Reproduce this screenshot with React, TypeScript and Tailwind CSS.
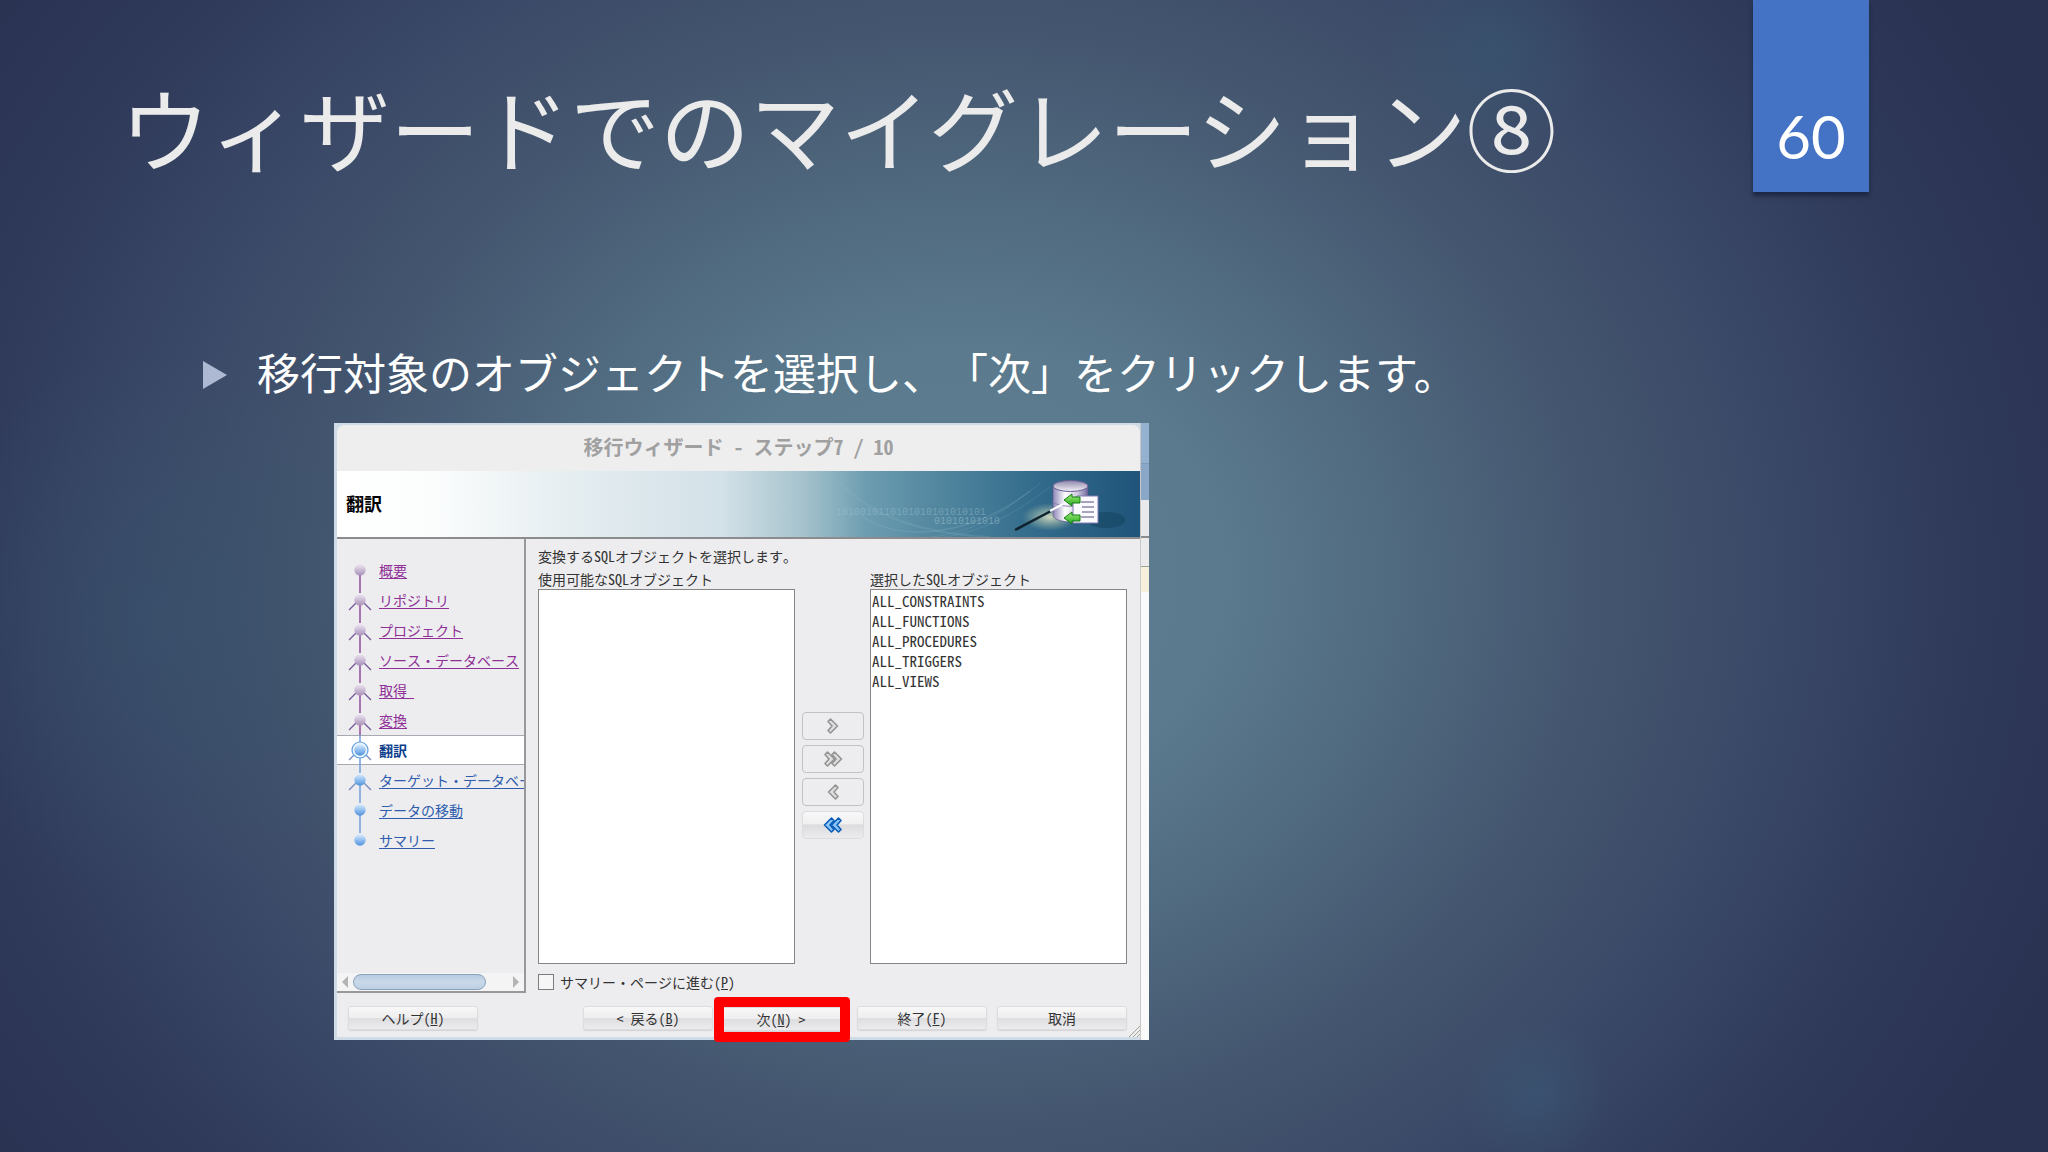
import { useState } from 'react';
import clsx from 'clsx';

type StepState = 'done' | 'current' | 'todo';

interface Step {
    label: string;
    state: StepState;
    branch: boolean;
}

const steps: Step[] = [
    { label: '概要', state: 'done', branch: false },
    { label: 'リポジトリ', state: 'done', branch: true },
    { label: 'プロジェクト', state: 'done', branch: true },
    { label: 'ソース・データベース', state: 'done', branch: true },
    { label: '取得\u00a0', state: 'done', branch: true },
    { label: '変換', state: 'done', branch: true },
    { label: '翻訳', state: 'current', branch: true },
    { label: 'ターゲット・データベース', state: 'todo', branch: true },
    { label: 'データの移動', state: 'todo', branch: false },
    { label: 'サマリー', state: 'todo', branch: false },
];

const selectedObjects = [
    'ALL_CONSTRAINTS',
    'ALL_FUNCTIONS',
    'ALL_PROCEDURES',
    'ALL_TRIGGERS',
    'ALL_VIEWS',
];

const buttonFace =
    'h-6 rounded-[3px] border border-[#dcdcde] bg-[linear-gradient(#f8f8f8_0%,#eeeeef_48%,#dedee0_52%,#ececee_100%)] text-sm leading-5 text-[#333] shadow-[0_1px_1px_#d4d4d6]';

// ステップ一覧の左側に並ぶ丸と線
const StepNode = ({ step, first, last }: { step: Step; first: boolean; last: boolean }) => {
    const done = step.state === 'done';
    const line = done ? '#8c4a9c' : '#6f9fdc';
    return (
        <svg className="h-[30px] w-[42px] shrink-0" viewBox="0 0 42 30" fill="none">
            <defs>
                <linearGradient id="ballDone" x1="0" y1="0" x2="0" y2="1">
                    <stop offset="0" stopColor="#ece6f2" />
                    <stop offset="1" stopColor="#a88fb8" />
                </linearGradient>
                <linearGradient id="ballTodo" x1="0" y1="0" x2="0" y2="1">
                    <stop offset="0" stopColor="#d8ecff" />
                    <stop offset="1" stopColor="#4f92de" />
                </linearGradient>
            </defs>
            {!first && <path d="M23 0v8" stroke={line} strokeWidth="1.5" />}
            {!last && <path d="M23 20v10" stroke={line} strokeWidth="1.5" />}
            {step.branch && (
                <path
                    d="M19 18l-7 7M27 18l7 7"
                    stroke={done ? '#75549a' : '#7288c0'}
                    strokeWidth="1.3"
                />
            )}
            {step.state === 'current' && (
                <circle cx="23" cy="15" r="8" fill="#eaf5ff" stroke="#5f9fe0" strokeWidth="1.2" />
            )}
            <circle cx="23" cy="15" r="5.7" fill={done ? 'url(#ballDone)' : 'url(#ballTodo)'} />
        </svg>
    );
};

const Chevron = ({ count, left, active }: { count: number; left?: boolean; active?: boolean }) => {
    const shape = 'M2 4.500L4.500 2L11.500 9L4.500 16L2 13.500L6 9Z';
    const fill = active ? '#8ec8fa' : '#dedede';
    const stroke = active ? '#0b5cb8' : '#949494';
    return (
        <svg
            className={clsx('h-[18px]', count === 2 ? 'w-5' : 'w-[14px]', left && '-scale-x-100')}
            viewBox={count === 2 ? '0 0 20 18' : '0 0 14 18'}
            fill={fill}
            stroke={stroke}
            strokeWidth="1.6"
            strokeLinejoin="round">
            <path d={shape} />
            {count === 2 && <path d={shape} transform="translate(7 0)" />}
        </svg>
    );
};

const BannerArt = () => (
    <svg className="absolute right-0 top-0 h-full w-[400px]" viewBox="0 0 400 66" fill="none">
        <defs>
            <radialGradient id="glow">
                <stop offset="0" stopColor="#f6f3c8" stopOpacity="0.8" />
                <stop offset="1" stopColor="#bcd0b0" stopOpacity="0" />
            </radialGradient>
            <linearGradient id="drum">
                <stop offset="0" stopColor="#8f86b8" />
                <stop offset="0.35" stopColor="#ffffff" />
                <stop offset="0.7" stopColor="#cfcadf" />
                <stop offset="1" stopColor="#6f6798" />
            </linearGradient>
            <linearGradient id="drumTop" x1="0" y1="0" x2="0" y2="1">
                <stop offset="0" stopColor="#8c86a8" />
                <stop offset="1" stopColor="#f4f2fa" />
            </linearGradient>
            <linearGradient id="arrow" x1="0" y1="0" x2="0" y2="1">
                <stop offset="0" stopColor="#a4f07a" />
                <stop offset="1" stopColor="#22a81c" />
            </linearGradient>
        </defs>
        <path d="M90 0C120 40 170 62 250 66" stroke="#8fb9c9" strokeOpacity="0.2" strokeWidth="2" />
        <path d="M120 44C160 72 230 66 290 20" stroke="#9cc4d2" strokeOpacity="0.2" strokeWidth="1.5" />
        <path d="M190 66C235 62 265 40 300 12M205 66C245 60 275 42 310 16" stroke="#8db4c6" strokeOpacity="0.2" />
        <text x="96" y="44" fill="#a9cbd8" fillOpacity="0.4" fontSize="10" fontFamily="Liberation Mono">
            1010010110101010101010101
        </text>
        <text x="194" y="53" fill="#b4d3de" fillOpacity="0.45" fontSize="10" fontFamily="Liberation Mono">
            01010101010
        </text>
        <ellipse cx="366" cy="49" rx="19" ry="8" fill="#12405c" fillOpacity="0.5" />
        <ellipse cx="310" cy="46" rx="28" ry="14" fill="url(#glow)" />
        <path d="M313 15v29c0 9 35 9 35 0V15z" fill="url(#drum)" stroke="#5e5488" strokeOpacity="0.6" />
        <path d="M313 30c2 7 33 7 35 0" stroke="#8b82ad" />
        <ellipse cx="330.500" cy="15" rx="17.500" ry="5.500" fill="url(#drumTop)" stroke="#655b92" />
        <path d="M275 59l36-19" stroke="#102430" strokeWidth="2.500" />
        <path d="M310 40l13-7" stroke="#ffffff" strokeWidth="2" />
        <path d="M337 25h21v27h-25V29z" fill="#fbfbff" stroke="#8078b8" />
        <path d="M341 31h13M342 36h12M342 41h12M341 46h13" stroke="#8a86ab" strokeWidth="1.300" />
        <path d="M324 29l8-6v3h8v6h-8v3z" fill="url(#arrow)" stroke="#157a14" />
        <path d="M324 47l8-6v3h8v6h-8v3z" fill="url(#arrow)" stroke="#157a14" />
    </svg>
);

const WizardWindow = () => {
    const [skipToSummary, setSkipToSummary] = useState(false);

    return (
        <div className="flex w-full max-w-[815px] bg-[#cfdce8] pb-[3px] pl-[3px] pt-[2px] font-['Noto_Sans_Mono_CJK_JP','Noto_Sans_CJK_JP',monospace]">
            <div className="min-w-0 flex-1 rounded-t-lg bg-[#ededef]">
                {/* タイトルバー */}
                <div className="flex h-[46px] items-center justify-center rounded-t-lg bg-[#eeeeef] pb-[2px] text-xl font-bold text-[#a0a0a0]">
                    移行ウィザード - ステップ7 / 10
                </div>

                {/* バナー */}
                <div className="relative flex h-[68px] items-center border-b-2 border-[#8c8c8e] bg-[linear-gradient(90deg,#ffffff_0%,#fbfdfd_12%,#e6eef1_28%,#d3e1e8_48%,#a6c3cd_58%,#6c9cb0_66%,#4f849d_76%,#326b8b_87%,#20547a_100%)] pb-[2px] pl-[9px]">
                    <BannerArt />
                    <h2 className="text-lg font-bold text-black">翻訳</h2>
                </div>

                <div className="flex">
                    {/* ステップ一覧 */}
                    <nav className="flex w-[189px] shrink-0 flex-col border-b-2 border-r-2 border-[#98989a] pt-4">
                        <ul>
                            {steps.map((step, i) => (
                                <li
                                    key={step.label}
                                    className={clsx(
                                        'flex h-[30px] items-center overflow-hidden whitespace-nowrap text-sm',
                                        step.state === 'current' &&
                                            'bg-white shadow-[inset_0_1px_0_#a9a9b4,inset_0_-1px_0_#a9a9b4]'
                                    )}>
                                    <StepNode step={step} first={i === 0} last={i === steps.length - 1} />
                                    {step.state === 'current' ? (
                                        <span className="font-bold text-[#0b3c8c]">{step.label}</span>
                                    ) : (
                                        <a
                                            href="#"
                                            className={clsx(
                                                'underline underline-offset-2',
                                                step.state === 'done' ? 'text-[#8f3096]' : 'text-[#2f5cae]'
                                            )}>
                                            {step.label}
                                        </a>
                                    )}
                                </li>
                            ))}
                        </ul>
                        {/* 横スクロールバー */}
                        <div className="mt-auto flex h-[18px] items-center justify-between bg-[#f4f4f5] px-1">
                            <svg className="h-3 w-2" viewBox="0 0 8 12" fill="#b4b4b6">
                                <path d="M7 0v12L1 6z" />
                            </svg>
                            <div className="ml-1 mr-auto h-4 w-[133px] rounded-full border border-[#8ba3bd] bg-[linear-gradient(#b7cbe0,#c9d9e9_50%,#bccfe2)]" />
                            <svg className="h-3 w-2" viewBox="0 0 8 12" fill="#b4b4b6">
                                <path d="M1 0v12l6-6z" />
                            </svg>
                        </div>
                    </nav>

                    {/* オブジェクト選択 */}
                    <div className="min-w-0 flex-1 pb-px pl-3 pr-[13px] pt-1 text-sm text-[#333]">
                        <p className="leading-[26px]">変換するSQLオブジェクトを選択します。</p>
                        <div className="flex">
                            <div className="min-w-0 flex-1">
                                <label htmlFor="available" className="block leading-5">
                                    使用可能なSQLオブジェクト
                                </label>
                                <select
                                    id="available"
                                    multiple
                                    className="block h-[375px] w-full overflow-hidden border border-[#858587] bg-white"
                                />
                            </div>
                            <div className="flex w-[75px] flex-col items-center gap-[5px] pt-[143px]">
                                <button aria-label="追加" className="flex h-7 w-[62px] items-center justify-center rounded border border-[#c2c2c4]">
                                    <Chevron count={1} />
                                </button>
                                <button aria-label="すべて追加" className="flex h-7 w-[62px] items-center justify-center rounded border border-[#c2c2c4]">
                                    <Chevron count={2} />
                                </button>
                                <button aria-label="削除" className="flex h-7 w-[62px] items-center justify-center rounded border border-[#c2c2c4]">
                                    <Chevron count={1} left />
                                </button>
                                <button
                                    aria-label="すべて削除"
                                    className="flex h-7 w-[62px] items-center justify-center rounded border border-[#dcdcde] bg-[linear-gradient(#f8f8f8_0%,#f0f0f0_45%,#dcdcde_50%,#ececee_100%)]">
                                    <Chevron count={2} left active />
                                </button>
                            </div>
                            <div className="min-w-0 flex-1">
                                <label htmlFor="selected" className="block leading-5">
                                    選択したSQLオブジェクト
                                </label>
                                <select
                                    id="selected"
                                    multiple
                                    className="block h-[375px] w-full overflow-hidden border border-[#858587] bg-white text-[15px]">
                                    {selectedObjects.map((name) => (
                                        <option key={name} className="h-5 px-px py-0 leading-[18px]">
                                            {name}
                                        </option>
                                    ))}
                                </select>
                            </div>
                        </div>
                        <label className="mt-2 flex h-5 items-center gap-[6px]">
                            <input
                                type="checkbox"
                                checked={skipToSummary}
                                onChange={(e) => setSkipToSummary(e.target.checked)}
                                className="h-4 w-4 appearance-none border border-[#7c7c7e] bg-[#f6f6f7] checked:bg-[#5f9fe0]"
                            />
                            <span>
                                サマリー・ページに進む(<u>P</u>)
                            </span>
                        </label>
                    </div>
                </div>

                {/* フッターのボタン */}
                <div className="relative flex pb-[6px] pl-[11px] pr-[13px] pt-[13px]">
                    <button className={clsx(buttonFace, 'w-[130px]')}>
                        ヘルプ(<u>H</u>)
                    </button>
                    <div className="ml-auto flex gap-[7px]">
                        <button className={clsx(buttonFace, 'w-[130px]')}>
                            &lt; 戻る(<u>B</u>)
                        </button>
                        <div className="relative z-10">
                            <button className={clsx(buttonFace, 'w-[130px] pr-2')}>
                                次(<u>N</u>) &gt;
                            </button>
                            <div className="pointer-events-none absolute -bottom-[11px] -left-[6px] -top-[9px] right-0 rounded-[4px] border-[10px] border-[#fe0000]" />
                        </div>
                        <button className={clsx(buttonFace, 'w-[130px]')}>
                            終了(<u>F</u>)
                        </button>
                    </div>
                    <button className={clsx(buttonFace, 'ml-[10px] w-[130px]')}>取消</button>
                    <svg className="absolute bottom-0 right-0 h-3 w-3" viewBox="0 0 12 12" stroke="#a3a58f">
                        <path d="M1 12L12 1M5 12l7-7M9 12l3-3" />
                    </svg>
                </div>
            </div>

            {/* 背後のウィンドウ */}
            <div className="-mb-[3px] -mt-[2px] flex w-[9px] flex-col border-l border-[#c8c8c8]">
                <div className="h-10 bg-[#94b2cf]" />
                <div className="h-[37px] border-t border-[#7f9bb8] bg-[#8aa7c8]" />
                <div className="h-[38px] border-b-2 border-[#8c8c8e] bg-[#e9e9eb]" />
                <div className="h-[29px] border-b border-[#a0a09a] bg-[#ebebec]" />
                <div className="h-[25px] bg-[#f7f0dc]" />
                <div className="flex-1 bg-[#fafafa]" />
            </div>
        </div>
    );
};

const App = () => {
    return (
        <main className="min-h-screen overflow-hidden bg-[#2a3252] bg-[radial-gradient(circle_at_73%_4%,#35647a4d_0%,#35647a00_6%),radial-gradient(circle_at_75%_95%,#3b6a844d_0%,#3b6a8400_4%),radial-gradient(ellipse_12%_24%_at_8%_54%,#37586f66_0%,#37586f00_100%),radial-gradient(ellipse_58%_90%_at_47%_50%,#5e7e90_0%,#5b7a8d_22%,#4f687e_38%,#44566f_53%,#394766_70%,#2e3858_86%,#2a3252_100%)] font-['Noto_Sans_CJK_JP',sans-serif] [text-spacing-trim:space-all]">
            <header className="flex items-start justify-between pl-[120px] pr-[179px]">
                <h1 className="pt-[66px] text-[90px] font-normal leading-[120px] text-[#ebebeb]">
                    ウィザードでのマイグレーション⑧
                </h1>
                <div className="flex h-48 w-[116px] items-end justify-center bg-[#4472c4] pb-[26px] font-['Lato'] text-6xl font-normal leading-[60px] text-white shadow-[0_4px_4px_#1c2744]">
                    60
                </div>
            </header>

            <section className="pl-[202px] pr-[179px] pt-[148px]">
                <ul>
                    <li className="flex items-center text-[43px] font-normal leading-[62px] text-white">
                        <svg className="mr-[29px] mt-2 h-[28px] w-[26px]" viewBox="0 0 26 28" fill="#adb9d3">
                            <path d="M1 0l24 14L1 28z" />
                        </svg>
                        移行対象のオブジェクトを選択し、「次」をクリックします。
                    </li>
                </ul>
                <div className="pl-[132px] pt-[21px]">
                    <WizardWindow />
                </div>
            </section>
        </main>
    );
};

export default App;
